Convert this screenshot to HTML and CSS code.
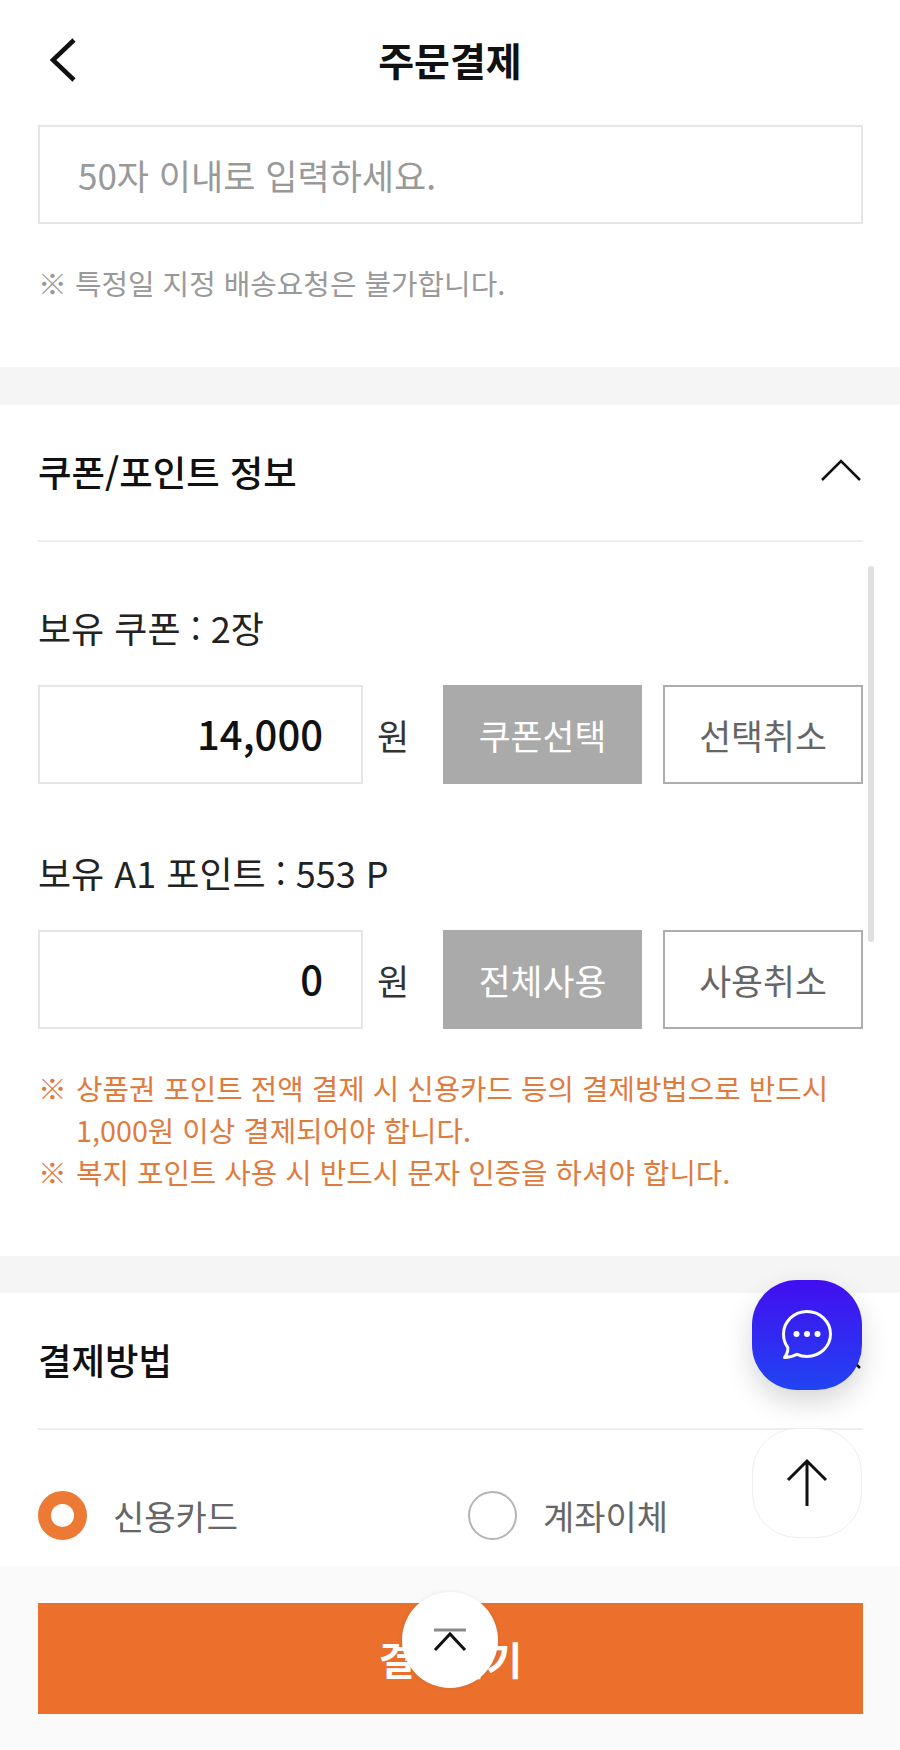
FILE: index.html
```html
<!DOCTYPE html>
<html lang="ko">
<head>
<meta charset="utf-8">
<title>주문결제</title>
<link rel="stylesheet" href="styles.css">
</head>
<body>
<div class="page">
  <header class="topbar">
    <svg class="back" viewBox="0 0 32 48" width="32" height="48"><path d="M26 4 L5 24 L26 44"/></svg>
    <h1 class="topbar-title">주문결제</h1>
  </header>

  <section class="panel panel-request">
    <div class="field-box">50자 이내로 입력하세요.</div>
    <p class="hint">※ 특정일 지정 배송요청은 불가합니다.</p>
  </section>

  <div class="band"></div>

  <section class="panel">
    <div class="panel-head">
      <h2 class="panel-title">쿠폰/포인트 정보</h2>
      <svg class="chev" viewBox="0 0 40 22" width="40" height="22"><path d="M1 21 L20 2 L39 21"/></svg>
    </div>
    <div class="panel-body">
      <div class="label">보유 쿠폰 : 2장</div>
      <div class="amount-row">
        <div class="amount">14,000</div>
        <div class="unit">원</div>
        <div class="btn btn-solid">쿠폰선택</div>
        <div class="btn btn-line">선택취소</div>
      </div>
      <div class="label label-next">보유 A1 포인트 : 553 P</div>
      <div class="amount-row">
        <div class="amount">0</div>
        <div class="unit">원</div>
        <div class="btn btn-solid">전체사용</div>
        <div class="btn btn-line">사용취소</div>
      </div>
      <ul class="notes">
        <li class="note"><span class="note-mark">※</span><span>상품권 포인트 전액 결제 시 신용카드 등의 결제방법으로 반드시 1,000원 이상 결제되어야 합니다.</span></li>
        <li class="note"><span class="note-mark">※</span><span>복지 포인트 사용 시 반드시 문자 인증을 하셔야 합니다.</span></li>
      </ul>
    </div>
  </section>

  <div class="band band-pay"></div>

  <section class="panel">
    <div class="panel-head panel-head-pay">
      <h2 class="panel-title">결제방법</h2>
      <svg class="chev" viewBox="0 0 40 22" width="40" height="22"><path d="M1 21 L20 2 L39 21"/></svg>
    </div>
    <div class="pay-row">
      <div class="pay-option"><span class="radio radio-on"></span><span class="pay-name">신용카드</span></div>
      <div class="pay-option"><span class="radio"></span><span class="pay-name">계좌이체</span></div>
    </div>
  </section>

  <footer class="bottom">
    <div class="submit">결제하기</div>
  </footer>

  <div class="scrollbar"></div>

  <div class="fab fab-chat">
    <svg viewBox="0 0 56 56" width="56" height="56">
      <path class="bubble" d="M28 4.5 C41 4.5 51.5 14.5 51.5 27 C51.5 39.5 41 49.5 28 49.5 C24.5 49.5 21 48.8 18 47.3 C14 49.5 10 50.5 5.5 50.5 C8 47.5 9 44 8.8 40.5 C6 36.8 4.5 32 4.5 27 C4.5 14.5 15 4.5 28 4.5 Z"/>
      <circle class="dot" cx="17.5" cy="27" r="3"/>
      <circle class="dot" cx="28" cy="27" r="3"/>
      <circle class="dot" cx="38.5" cy="27" r="3"/>
    </svg>
  </div>
  <div class="fab fab-top">
    <svg viewBox="0 0 44 50" width="44" height="50"><path d="M22 48 L22 3 M3 22 L22 3 L41 22"/></svg>
  </div>
  <div class="collapse">
    <svg viewBox="0 0 36 26" width="36" height="26"><path class="collapse-bar" d="M2 4 L34 4"/><path class="collapse-chev" d="M3 24 L18 8 L33 24"/></svg>
  </div>
</div>
</body>
</html>
```

FILE: styles.css
```css
* { box-sizing: border-box; }
html, body { margin: 0; padding: 0; }
body {
  font-family: "Noto Sans CJK KR", "Noto Sans", sans-serif;
  background: #fff;
  color: #111;
}
.page {
  position: relative;
  width: 900px;
  height: 1750px;
  overflow: hidden;
  display: flex;
  flex-direction: column;
}
h1, h2, p, ul { margin: 0; padding: 0; }
ul { list-style: none; }

.topbar {
  height: 125px;
  flex: none;
  position: relative;
  display: flex;
  align-items: flex-start;
  justify-content: center;
  padding-top: 31px;
}
.topbar-title { font-size: 39px; font-weight: 700; line-height: 56px; color: #111; }
.back { position: absolute; left: 48px; top: 36px; }
.back path { fill: none; stroke: #111; stroke-width: 4.5; }

.panel { padding: 0 37px 0 38px; flex: none; }
.panel-request { padding-bottom: 63px; }
.field-box {
  height: 99px;
  border: 2px solid #e5e5e5;
  display: flex;
  align-items: center;
  padding-left: 38px;
  font-size: 35px;
  color: #999;
}
.hint { margin-top: 38px; font-size: 28.85px; line-height: 42px; color: #999; }
.band { height: 38px; flex: none; background: #f5f5f5; }
.band-pay { height: 37px; }

.panel-head {
  height: 137px;
  display: flex;
  align-items: center;
  justify-content: space-between;
  border-bottom: 2px solid #eeeeee;
}
.panel-head-pay { height: 137px; }
.panel-title { font-size: 36.4px; font-weight: 500; line-height: 50px; margin-bottom: 3px; color: #111; }
.chev { margin-right: 2px; margin-bottom: 5px; flex: none; }
.chev path { fill: none; stroke: #111; stroke-width: 2.5; }

.panel-body { padding: 60px 0 63px; }
.label { font-size: 36px; line-height: 50px; margin-bottom: 33px; color: #222; }
.label-next { margin-top: 63px; }
.amount-row { display: flex; height: 99px; }
.amount {
  width: 325px;
  border: 2px solid #e5e5e5;
  display: flex;
  align-items: center;
  justify-content: flex-end;
  padding: 0 38px 3px 0;
  font-size: 40px;
  font-weight: 500;
  color: #111;
}
.unit { width: 80px; padding-left: 14px; display: flex; align-items: center; font-size: 35px; color: #333; }
.btn { display: flex; align-items: center; justify-content: center; font-size: 34.7px; }
.btn-solid { width: 199px; background: #aaaaaa; color: #fff; }
.btn-line { width: 200px; margin-left: 21px; border: 2.5px solid #adadad; color: #666; }

.notes { margin-top: 38px; }
.note { display: flex; font-size: 28.75px; line-height: 42px; color: #e07b3e; }
.note-mark { flex: none; width: 38px; }

.pay-row { display: flex; height: 136px; align-items: center; padding-top: 35px; }
.pay-option { display: flex; align-items: center; width: 430px; flex: none; }
.radio {
  width: 49px;
  height: 49px;
  border-radius: 50%;
  border: 2px solid #b5b5b5;
  flex: none;
}
.radio-on { border: 13px solid #ec7a35; }
.pay-name { margin-left: 26px; font-size: 34px; color: #666; }

.bottom {
  flex: 1;
  background: #fafafa;
  padding: 37px 37px 0 38px;
}
.submit {
  height: 111px;
  background: #ea702c;
  color: #fff;
  font-size: 39px;
  font-weight: 700;
  display: flex;
  align-items: center;
  justify-content: center;
  padding-bottom: 2px;
}

.scrollbar {
  position: absolute;
  left: 868px;
  top: 566px;
  width: 6px;
  height: 376px;
  border-radius: 3px;
  background: #e0e0e0;
}
.fab {
  position: absolute;
  left: 752px;
  width: 110px;
  height: 110px;
  border-radius: 45px;
  display: flex;
  align-items: center;
  justify-content: center;
}
.fab-chat {
  top: 1280px;
  background: linear-gradient(180deg, #420ef0 0%, #2144f2 100%);
  box-shadow: 0 12px 28px rgba(0, 0, 0, 0.16);
}
.bubble { fill: none; stroke: #fff; stroke-width: 3; stroke-linejoin: round; }
.dot { fill: #fff; }
.fab-top { top: 1428px; background: #fff; border: 1.5px solid #eeeeee; }
.fab-top path { fill: none; stroke: #111; stroke-width: 3; }
.collapse {
  position: absolute;
  left: 402px;
  top: 1592px;
  width: 96px;
  height: 96px;
  border-radius: 50%;
  background: #fff;
  box-shadow: 0 0 4px rgba(0, 0, 0, 0.08);
  display: flex;
  align-items: center;
  justify-content: center;
  padding-bottom: 2px;
}
.collapse path { fill: none; stroke-width: 3; }
.collapse-bar { stroke: #8a8a8a; }
.collapse-chev { stroke: #111; stroke-width: 4; }
```
